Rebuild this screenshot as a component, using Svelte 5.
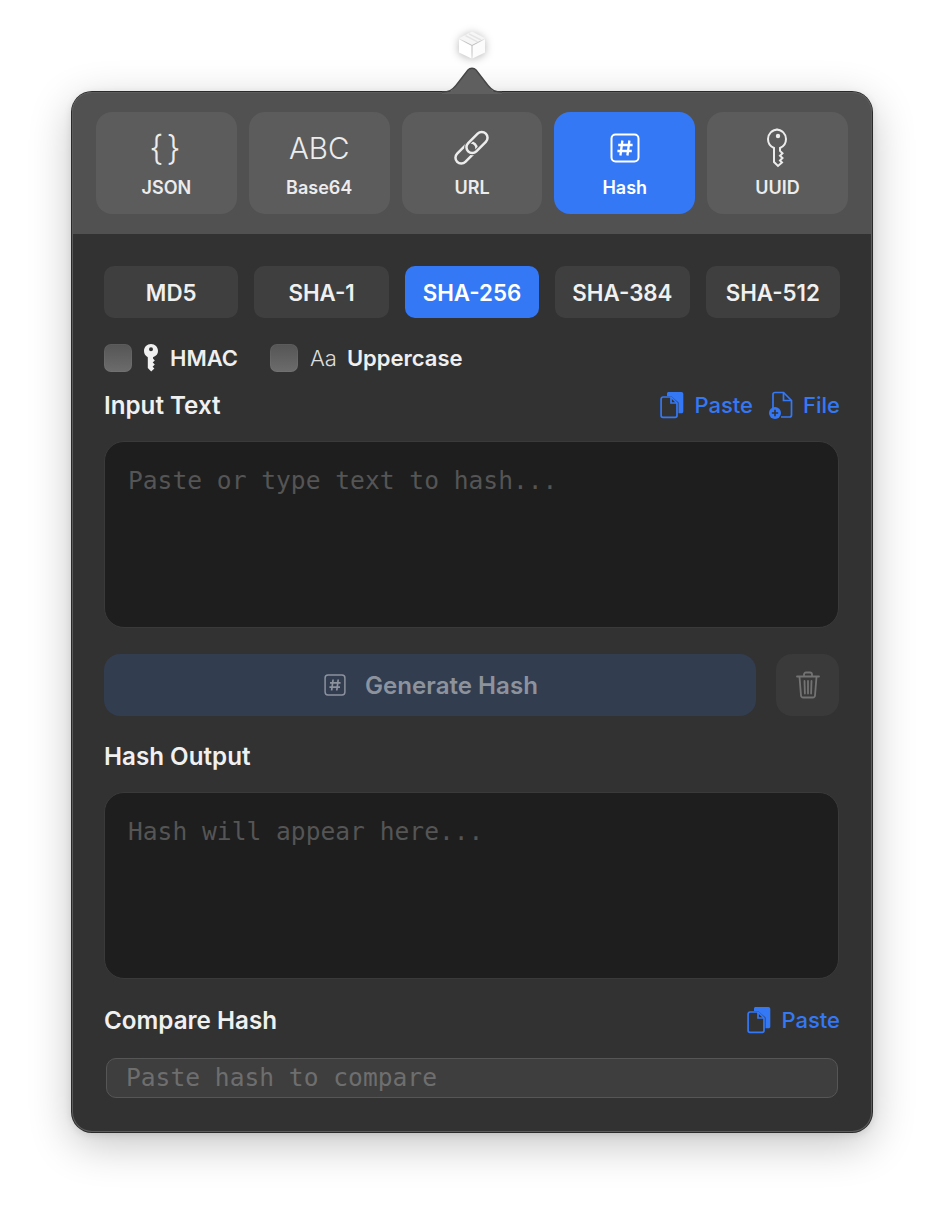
<script lang="ts">
  const tabs = [
    { id: 'json', label: 'JSON' },
    { id: 'abc', label: 'Base64' },
    { id: 'url', label: 'URL' },
    { id: 'hash', label: 'Hash', active: true },
    { id: 'uuid', label: 'UUID' }
  ];
  const algos = ['MD5', 'SHA-1', 'SHA-256', 'SHA-384', 'SHA-512'];
</script>

{#snippet hashIcon(size)}
  <svg width={size} height={size} viewBox="0 0 30 30" fill="none" stroke="currentColor" stroke-width="2">
    <rect x="1.500" y="1.500" width="27" height="27" rx="4" />
    <path d="M12.400 7.500 10.400 22.500M19.400 7.500l-2 15M8.200 12h14.400M7.400 18h14.400" stroke-width="2.300" />
  </svg>
{/snippet}

{#snippet pasteIcon()}
  <svg class="link-icon" width="24" height="28" viewBox="0 0 24 28" fill="none" stroke="currentColor" stroke-width="1.700">
    <path d="M7 2.600C7 1.700 7.700 1 8.600 1h12.800c1.100 0 1.900.8 1.900 1.900v17.600c0 1-.8 1.800-1.800 1.800h-3V11.500L11 5H7z" fill="currentColor" stroke="none" />
    <path d="M3 6h8l6 6v12.500c0 1.100-.9 1.900-1.900 1.900H3c-1 0-1.900-.8-1.900-1.900V8c0-1.100.9-2 1.900-2z" />
    <path d="M11 6v6h6" />
  </svg>
{/snippet}

<div class="page">
  <div class="cube">
    <svg width="30" height="30" viewBox="0 0 30 30">
      <path d="M15 1.500 28 8.200 15 15 2 8.200z" fill="#f6f6f6" />
      <path d="M2 9.300 14.500 15.700V28.500L2 22.500z" fill="#fff" />
      <path d="M28 9.300 15.500 15.700V28.500l12.500-6z" fill="#fcfcfc" />
      <path d="M8.500 5.600 20.500 11.800M12 3.800l12 6.200" stroke="#e4e4e4" stroke-width="1.500" />
    </svg>
  </div>

  <div class="popover">
    <svg class="notch" width="60" height="28" viewBox="0 0 60 28">
      <path d="M0 26.500C7 26.500 10 25 14 20L26 4.500C28 2 32 2 34 4.500L46 20c4 5 7 6.500 14 6.500V28H0z" fill="#5f5f5f" />
      <path d="M0 26C7 26 10 24.500 14 19.500L26 4C28 1.500 32 1.500 34 4L46 19.500C50 24.500 53 26 60 26" fill="none" stroke="#444" stroke-width="1.500" />
    </svg>

    <header class="tabs">
      {#each tabs as t}
        <div class="tab" class:active={t.active}>
          <div class="tab-icon">
            {#if t.id === 'json'}
              <span class="braces">{'{}'}</span>
            {:else if t.id === 'abc'}
              <span class="abc">ABC</span>
            {:else if t.id === 'url'}
              <svg width="36" height="36" viewBox="0 0 36 36" fill="none" stroke="currentColor" stroke-width="2.500">
                <rect x="-12.500" y="-5.800" width="25" height="11.600" rx="5.800" transform="translate(12 23) rotate(-45)" />
                <rect x="-12.500" y="-5.800" width="25" height="11.600" rx="5.800" transform="translate(23 12.500) rotate(-45)" stroke="#5c5c5c" stroke-width="4.500" />
                <rect x="-12.500" y="-5.800" width="25" height="11.600" rx="5.800" transform="translate(23 12.500) rotate(-45)" />
              </svg>
            {:else if t.id === 'hash'}
              {@render hashIcon(30)}
            {:else}
              <svg width="24" height="40" viewBox="0 0 24 40" fill="none" stroke="currentColor" stroke-width="2">
                <path d="M12 1.500C6 1.500 2 6 2 11c0 4 2.500 7.500 6 9v14l4 4 4-3.500-2-2 2.500-2.500-2.500-2.200 2.500-2.600-2.500-2.300V20c3.500-1.500 6-5 6-9 0-5-4-9.500-10-9.500z" />
                <circle cx="12" cy="8" r="2.200" fill="currentColor" stroke="none" />
              </svg>
            {/if}
          </div>
          <div class="tab-label">{t.label}</div>
        </div>
      {/each}
    </header>

    <div class="body">
      <div class="algos">
        {#each algos as a}
          <div class="algo" class:active={a === 'SHA-256'}>{a}</div>
        {/each}
      </div>

      <div class="options">
        <div class="option hmac">
          <span class="check"></span>
          <svg width="14" height="28" viewBox="0 0 14 28">
            <path fill-rule="evenodd" fill="#f0f0f0" d="M7 0C3 0 0 3 0 7c0 2.800 1.500 5 3.800 6.200V24l3.400 3.500 3.200-3-1.800-1.800 2.200-2.200-2.100-1.900 2.100-2.200-1.800-1.900v-1.300C12.500 12 14 9.800 14 7c0-4-3-7-7-7zm0 3.200a2 2 0 1 1 0 4 2 2 0 0 1 0-4z" />
          </svg>
          <span>HMAC</span>
        </div>
        <div class="option upper">
          <span class="check"></span>
          <span class="aa">Aa</span>
          <span>Uppercase</span>
        </div>
      </div>

      <div class="field-head first">
        <span class="title">Input Text</span>
        <div class="links">
          <span class="link">{@render pasteIcon()}Paste</span>
          <span class="link">
            <svg class="link-icon" width="24" height="28" viewBox="0 0 24 28" fill="none" stroke="currentColor" stroke-width="1.700">
              <path d="M4 17V3.500C4 2.400 4.900 1.500 6 1.500h8.500l8 8V24c0 1.100-.9 2-2 2H12" />
              <path d="M14.500 1.500V9.500h8" />
              <circle cx="6" cy="22" r="6" fill="currentColor" stroke="none" />
              <path d="M2.800 22h6.400M6 18.800v6.400" stroke="#323232" stroke-width="1.600" />
            </svg>
            File
          </span>
        </div>
      </div>

      <div class="area">Paste or type text to hash...</div>

      <div class="actions">
        <div class="generate">
          {@render hashIcon(22)}
          <span>Generate Hash</span>
        </div>
        <div class="trash">
          <svg width="24" height="28" viewBox="0 0 24 28" fill="none" stroke="currentColor" stroke-width="1.800" stroke-linecap="round">
            <path d="M1 5.500h22M8 5V3.500C8 2.300 8.800 1.500 10 1.500h4c1.200 0 2 .8 2 2V5" />
            <path d="M3.500 6 5 24.500c.1 1.200 1 2 2.200 2h9.600c1.200 0 2.100-.8 2.200-2L20.500 6" />
            <path d="M8.500 10l.4 12.500M12 10v12.500M15.500 10l-.4 12.500" />
          </svg>
        </div>
      </div>

      <div class="field-head second"><span class="title">Hash Output</span></div>
      <div class="area">Hash will appear here...</div>

      <div class="field-head third">
        <span class="title">Compare Hash</span>
        <div class="links"><span class="link">{@render pasteIcon()}Paste</span></div>
      </div>

      <div class="compare">Paste hash to compare</div>
    </div>
  </div>
</div>

<style>
  :global(body) {
    margin: 0;
    background: #fff;
  }
  .page {
    width: 944px;
    height: 1212px;
    box-sizing: border-box;
    padding: 30px 72px 0;
    font-family: Inter, "Liberation Sans", sans-serif;
    overflow: hidden;
  }
  .cube {
    height: 30px;
    margin-bottom: 32px;
    display: flex;
    justify-content: center;
    filter: drop-shadow(0 1px 4px rgba(0, 0, 0, 0.3));
  }
  .popover {
    position: relative;
    width: 800px;
    height: 1040px;
    border-radius: 20px;
    background: #323232;
    box-shadow: 0 0 0 1px #2a2a2a, inset 0 0 0 1px #5c5c5c, 0 12px 44px rgba(0, 0, 0, 0.24), 0 2px 8px rgba(0, 0, 0, 0.12);
    display: flex;
    flex-direction: column;
  }
  .notch {
    position: absolute;
    left: 370px;
    top: -26px;
  }
  .tabs {
    height: 142px;
    box-sizing: border-box;
    padding: 20px 24px 0;
    background: #515151;
    border-radius: 20px 20px 0 0;
    box-shadow: inset 0 1px 0 #5c5c5c, inset 1px 0 0 #5c5c5c, inset -1px 0 0 #5c5c5c;
    display: grid;
    grid-template-columns: repeat(5, 1fr);
    column-gap: 12px;
    align-items: start;
  }
  .tab {
    height: 102px;
    border-radius: 16px;
    background: #5c5c5c;
    color: #ececec;
    display: flex;
    flex-direction: column;
    align-items: center;
  }
  .tab.active {
    background: #3478f6;
    color: #fff;
  }
  .tab-icon {
    height: 40px;
    margin-top: 16px;
    display: flex;
    align-items: center;
    justify-content: center;
  }
  .braces {
    font-size: 34px;
    font-weight: 300;
    letter-spacing: 3px;
    line-height: 40px;
    font-family: Inter, sans-serif;
  }
  .abc {
    font-size: 29.500px;
    font-weight: 300;
    line-height: 40px;
  }
  .tab-label {
    margin-top: 9px;
    font-size: 18px;
    font-weight: 600;
    line-height: 22px;
  }
  .body {
    flex: 1;
    padding: 32px 32px 0;
    display: flex;
    flex-direction: column;
  }
  .algos {
    display: grid;
    grid-template-columns: repeat(5, 1fr);
    column-gap: 16px;
    width: 736px;
  }
  .algo {
    height: 52px;
    border-radius: 10px;
    background: #3f3f3f;
    color: #f0f0f0;
    font-size: 22.300px;
    font-weight: 600;
    display: flex;
    align-items: center;
    justify-content: center;
  }
  .algo.active {
    background: #3478f6;
    color: #fff;
  }
  .options {
    margin-top: 26px;
    height: 28px;
    display: flex;
    color: #efefef;
    font-size: 22px;
    font-weight: 600;
  }
  .option {
    display: flex;
    align-items: center;
  }
  .hmac {
    gap: 12px;
    width: 166px;
  }
  .upper {
    gap: 10px;
  }
  .check {
    width: 28px;
    height: 28px;
    box-sizing: border-box;
    border-radius: 7px;
    background: linear-gradient(#555, #6c6c6c);
    box-shadow: inset 0 0 0 1px rgba(255, 255, 255, 0.04);
  }
  .upper .check {
    margin-right: 2px;
  }
  .aa {
    font-weight: 300;
    color: #ddd;
  }
  .field-head {
    display: flex;
    justify-content: space-between;
    align-items: center;
    height: 30px;
  }
  .field-head.first {
    margin-top: 18px;
    margin-bottom: 21px;
  }
  .field-head.second {
    margin-top: 25px;
    margin-bottom: 21px;
  }
  .field-head.third {
    margin-top: 26px;
    margin-bottom: 23px;
  }
  .title {
    color: #f0f0f0;
    font-size: 24.200px;
    font-weight: 600;
  }
  .links {
    display: flex;
    gap: 16px;
  }
  .link {
    display: flex;
    align-items: center;
    gap: 10px;
    color: #3478f6;
    font-size: 22px;
    font-weight: 500;
  }
  .area {
    width: 735px;
    height: 187px;
    box-sizing: border-box;
    padding: 23px 23px;
    border-radius: 20px;
    background: #1e1e1e;
    border: 1px solid #3a3a3a;
    color: #555;
    font-family: "DejaVu Sans Mono", "Liberation Mono", monospace;
    font-size: 24.600px;
    line-height: 32px;
  }
  .actions {
    margin-top: 26px;
    display: flex;
    gap: 20px;
    height: 62px;
  }
  .generate {
    width: 652px;
    padding-left: 2px;
    box-sizing: border-box;
    border-radius: 16px;
    background: #323d50;
    color: #8d939d;
    font-size: 24.100px;
    font-weight: 600;
    display: flex;
    align-items: center;
    justify-content: center;
    gap: 19px;
  }
  .trash {
    width: 63px;
    border-radius: 16px;
    background: #3a3a3a;
    color: #737373;
    display: flex;
    align-items: center;
    justify-content: center;
  }
  .compare {
    width: 732px;
    height: 40px;
    margin-left: 2px;
    box-sizing: border-box;
    padding-left: 19px;
    border-radius: 10px;
    background: #3e3e3e;
    border: 1px solid #565656;
    color: #6e6e6e;
    font-family: "DejaVu Sans Mono", "Liberation Mono", monospace;
    font-size: 24.600px;
    line-height: 38px;
  }
</style>
